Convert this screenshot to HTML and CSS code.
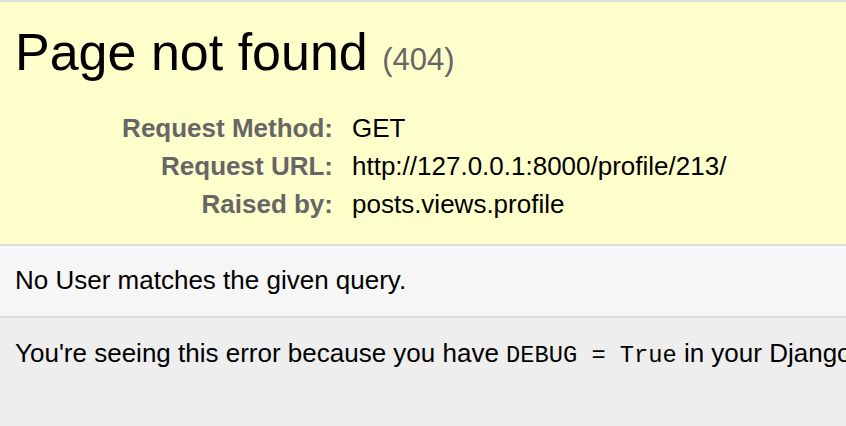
FILE: index.html
```
<!DOCTYPE html>
<html lang="en">
<head>
<meta charset="utf-8">
<title>Page not found at /profile/213/</title>
<link rel="stylesheet" href="styles.css">
</head>
<body>
<div class="topline"></div>
<div class="summary">
  <h1 class="title">Page not found <span class="code-num">(404)</span></h1>
  <table class="meta">
    <tr><th>Request Method:</th><td>GET</td></tr>
    <tr><th>Request URL:</th><td>http://127.0.0.1:8000/profile/213/</td></tr>
    <tr><th>Raised by:</th><td>posts.views.profile</td></tr>
  </table>
</div>
<div class="info">
  <p>No User matches the given query.</p>
</div>
<div class="explanation">
  <p>You're seeing this error because you have <code>DEBUG = True</code> in your Django settings file. Change that to <code>False</code>, and Django will display a standard 404 page.</p>
</div>
</body>
</html>
```
FILE: styles.css
```
html, body, div, h1, p, table, th, td { margin: 0; padding: 0; }
html { background: #eee; }
body {
  font-family: "Liberation Sans", Arial, sans-serif;
  font-size: 26px;
  color: #000;
  background: #eee;
  overflow: hidden;
  width: 846px;
  height: 426px;
}
.topline { height: 2px; background: #ddd; }
.summary {
  background: #ffc;
  padding: 20px 15px 21px;
  border-bottom: 2px solid #ddd;
  white-space: nowrap;
}
.title {
  font-size: 52px;
  font-weight: normal;
  line-height: 60px;
  margin-bottom: 19px;
}
.code-num { font-size: 31px; color: #666; }
.meta { border: none; border-collapse: collapse; }
.meta th, .meta td { vertical-align: top; padding: 4px 6px; line-height: 30px; }
.meta th {
  width: 312px;
  text-align: right;
  color: #666;
  font-weight: bold;
  padding-right: 13px;
}
.info {
  background: #f6f6f6;
  padding: 19px 15px 21px;
  border-bottom: 2px solid #ddd;
  white-space: nowrap;
  line-height: 30px;
}
.explanation {
  background: #eee;
  padding: 20px 15px;
  white-space: nowrap;
  line-height: 30px;
}
code { font-family: "Liberation Mono", "Courier New", monospace; font-size: 23.7px; }
```
